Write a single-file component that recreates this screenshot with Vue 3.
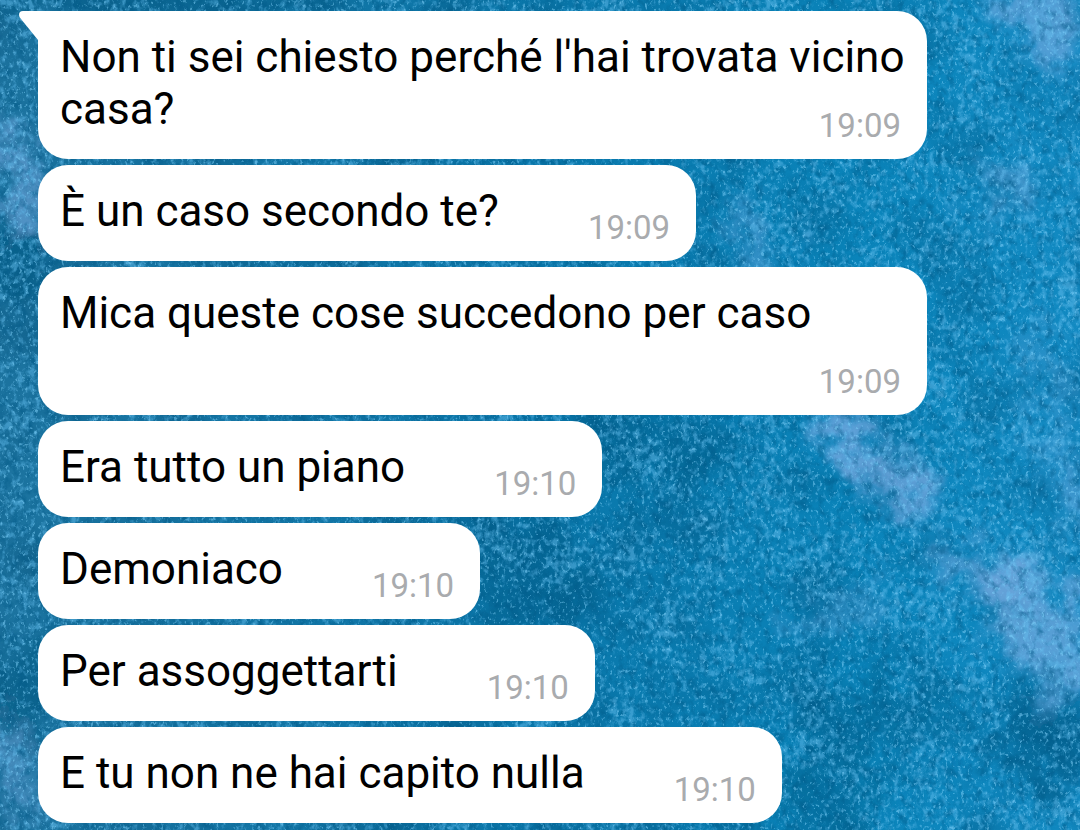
<script setup>
const messages = [
  { text: "Non ti sei chiesto perché l'hai trovata vicino casa?", time: '19:09' },
  { text: 'È un caso secondo te?', time: '19:09' },
  { text: 'Mica queste cose succedono per caso', time: '19:09' },
  { text: 'Era tutto un piano', time: '19:10' },
  { text: 'Demoniaco', time: '19:10' },
  { text: 'Per assoggettarti', time: '19:10' },
  { text: 'E tu non ne hai capito nulla', time: '19:10' },
]
</script>

<template>
  <main class="chat">
    <svg class="wallpaper" viewBox="0 0 1080 830" preserveAspectRatio="xMidYMid slice" aria-hidden="true">
      <defs>
        <linearGradient id="sea" x1="0" y1="0" x2="1" y2="0">
          <stop offset="0" stop-color="#1c739f" />
          <stop offset="0.5" stop-color="#0a77aa" />
          <stop offset="0.8" stop-color="#0a84ba" />
          <stop offset="1" stop-color="#128ac2" />
        </linearGradient>
        <filter id="paint" x="-20%" y="-20%" width="140%" height="140%">
          <feGaussianBlur stdDeviation="12" result="soft" />
          <feTurbulence type="fractalNoise" baseFrequency="0.03" numOctaves="5" seed="8" result="warp" />
          <feDisplacementMap in="soft" in2="warp" scale="80" xChannelSelector="R" yChannelSelector="G" />
        </filter>
        <filter id="clouds" x="0" y="0" width="100%" height="100%" color-interpolation-filters="sRGB">
          <feTurbulence type="fractalNoise" baseFrequency="0.014" numOctaves="5" seed="21" />
          <feColorMatrix values="0 0 0 0 0  0 0 0 0 0.27  0 0 0 0 0.42  2.6 0 0 0 -1.15" />
        </filter>
        <filter id="grain" x="0" y="0" width="100%" height="100%" color-interpolation-filters="sRGB">
          <feTurbulence type="fractalNoise" baseFrequency="0.17 0.13" numOctaves="4" seed="5" />
          <feColorMatrix values="0 0 0 0 0  0 0 0 0 0  0 0 0 0 0  1 0 0 0 0" result="fine" />
          <feTurbulence type="fractalNoise" baseFrequency="0.019" numOctaves="3" seed="33" />
          <feColorMatrix values="0 0 0 0 0  0 0 0 0 0  0 0 0 0 0  0 1 0 0 0" result="drift" />
          <feComposite in="fine" in2="drift" operator="arithmetic" k1="0" k2="0.65" k3="0.35" k4="0" />
          <feColorMatrix values="0 0 0 0 0.4  0 0 0 0 0.75  0 0 0 0 0.94  0 0 0 5 -2.5" />
        </filter>
        <filter id="sparkle" x="0" y="0" width="100%" height="100%" color-interpolation-filters="sRGB">
          <feTurbulence type="fractalNoise" baseFrequency="0.31 0.23" numOctaves="3" seed="71" />
          <feColorMatrix values="0 0 0 0 0.5  0 0 0 0 0.82  0 0 0 0 0.98  0 0 6 0 -3.6" />
        </filter>
        <filter id="shade" x="0" y="0" width="100%" height="100%" color-interpolation-filters="sRGB">
          <feTurbulence type="fractalNoise" baseFrequency="0.11 0.09" numOctaves="4" seed="14" />
          <feColorMatrix values="0 0 0 0 0  0 0 0 0 0.35  0 0 0 0 0.53  0 3 0 0 -1.45" />
        </filter>
      </defs>
      <rect width="1080" height="830" fill="url(#sea)" />
      <rect width="1080" height="830" filter="url(#clouds)" opacity="0.3" />
      <g filter="url(#paint)">
        <g fill="#075983">
          <ellipse cx="640" cy="450" rx="110" ry="35" opacity="0.4" />
          <ellipse cx="530" cy="575" rx="60" ry="60" opacity="0.4" />
          <ellipse cx="890" cy="720" rx="90" ry="35" opacity="0.4" />
          <ellipse cx="1050" cy="740" rx="60" ry="50" opacity="0.6" />
          <ellipse cx="830" cy="800" rx="50" ry="60" opacity="0.35" />
          <ellipse cx="15" cy="255" rx="30" ry="40" opacity="0.7" />
          <ellipse cx="25" cy="690" rx="40" ry="50" opacity="0.5" />
          <ellipse cx="150" cy="0" rx="170" ry="18" opacity="0.6" />
        </g>
        <g fill="none" stroke="#77a9e0" stroke-linecap="round">
          <path d="M835 415 Q860 470 915 495" stroke-width="38" opacity="0.85" />
          <path d="M955 560 L1015 585" stroke-width="36" opacity="0.6" />
          <path d="M1020 595 L1055 650" stroke-width="76" opacity="0.7" />
          <path d="M1030 0 L1060 30" stroke-width="64" opacity="0.65" />
          <path d="M1005 180 L1017 200" stroke-width="38" opacity="0.5" />
          <path d="M5 145 L40 220" stroke-width="36" opacity="0.65" />
          <path d="M5 740 L30 800" stroke-width="32" opacity="0.5" />
          <path d="M735 220 L770 265" stroke-width="32" opacity="0.45" />
          <path d="M1075 480 L1090 520" stroke-width="34" opacity="0.5" />
          <path d="M810 625 L870 600" stroke-width="30" opacity="0.35" />
          <path d="M1040 340 L1060 460" stroke-width="34" opacity="0.25" />
        </g>
      </g>
      <rect width="1080" height="830" filter="url(#shade)" opacity="0.5" />
      <rect width="1080" height="830" filter="url(#grain)" opacity="0.5" />
      <rect width="1080" height="830" filter="url(#sparkle)" opacity="0.5" />
    </svg>

    <ol class="messages">
      <li v-for="(message, index) in messages" :key="index" class="bubble" :class="{ first: index === 0 }">
        <svg v-if="index === 0" class="tail" viewBox="0 0 24 34" aria-hidden="true">
          <path d="M24 0H4Q0 0 0 4Q0 6 2 8L19 29L24 34Z" fill="#fff" />
        </svg>
        <span class="text">{{ message.text }}</span>
        <time class="time">{{ message.time }}</time>
      </li>
    </ol>
  </main>
</template>

<style>
body {
  margin: 0;
}
</style>

<style scoped>
.chat {
  position: relative;
  box-sizing: border-box;
  min-height: 100vh;
  padding: 11px 153px 7px 38px;
  overflow: hidden;
  background: #0a78ae;
  font-family: Roboto, "Liberation Sans", sans-serif;
}

.wallpaper {
  position: absolute;
  inset: 0;
  width: 100%;
  height: 100%;
}

.messages {
  position: relative;
  display: flex;
  flex-direction: column;
  align-items: flex-start;
  gap: 6px;
  margin: 0;
  padding: 0;
  list-style: none;
}

.bubble {
  position: relative;
  display: flow-root;
  padding: 20px 22px 24px;
  border-radius: 30px;
  background: #fff;
  color: #000;
  font-size: 44px;
  line-height: 52px;
}

.first {
  border-top-left-radius: 0;
}

.tail {
  position: absolute;
  top: 0;
  left: -19px;
  width: 24px;
  height: 34px;
}

.time {
  float: right;
  margin: 0 4px -17px 89px;
  padding-top: 17px;
  color: #a9abae;
  font-size: 33px;
}
</style>
